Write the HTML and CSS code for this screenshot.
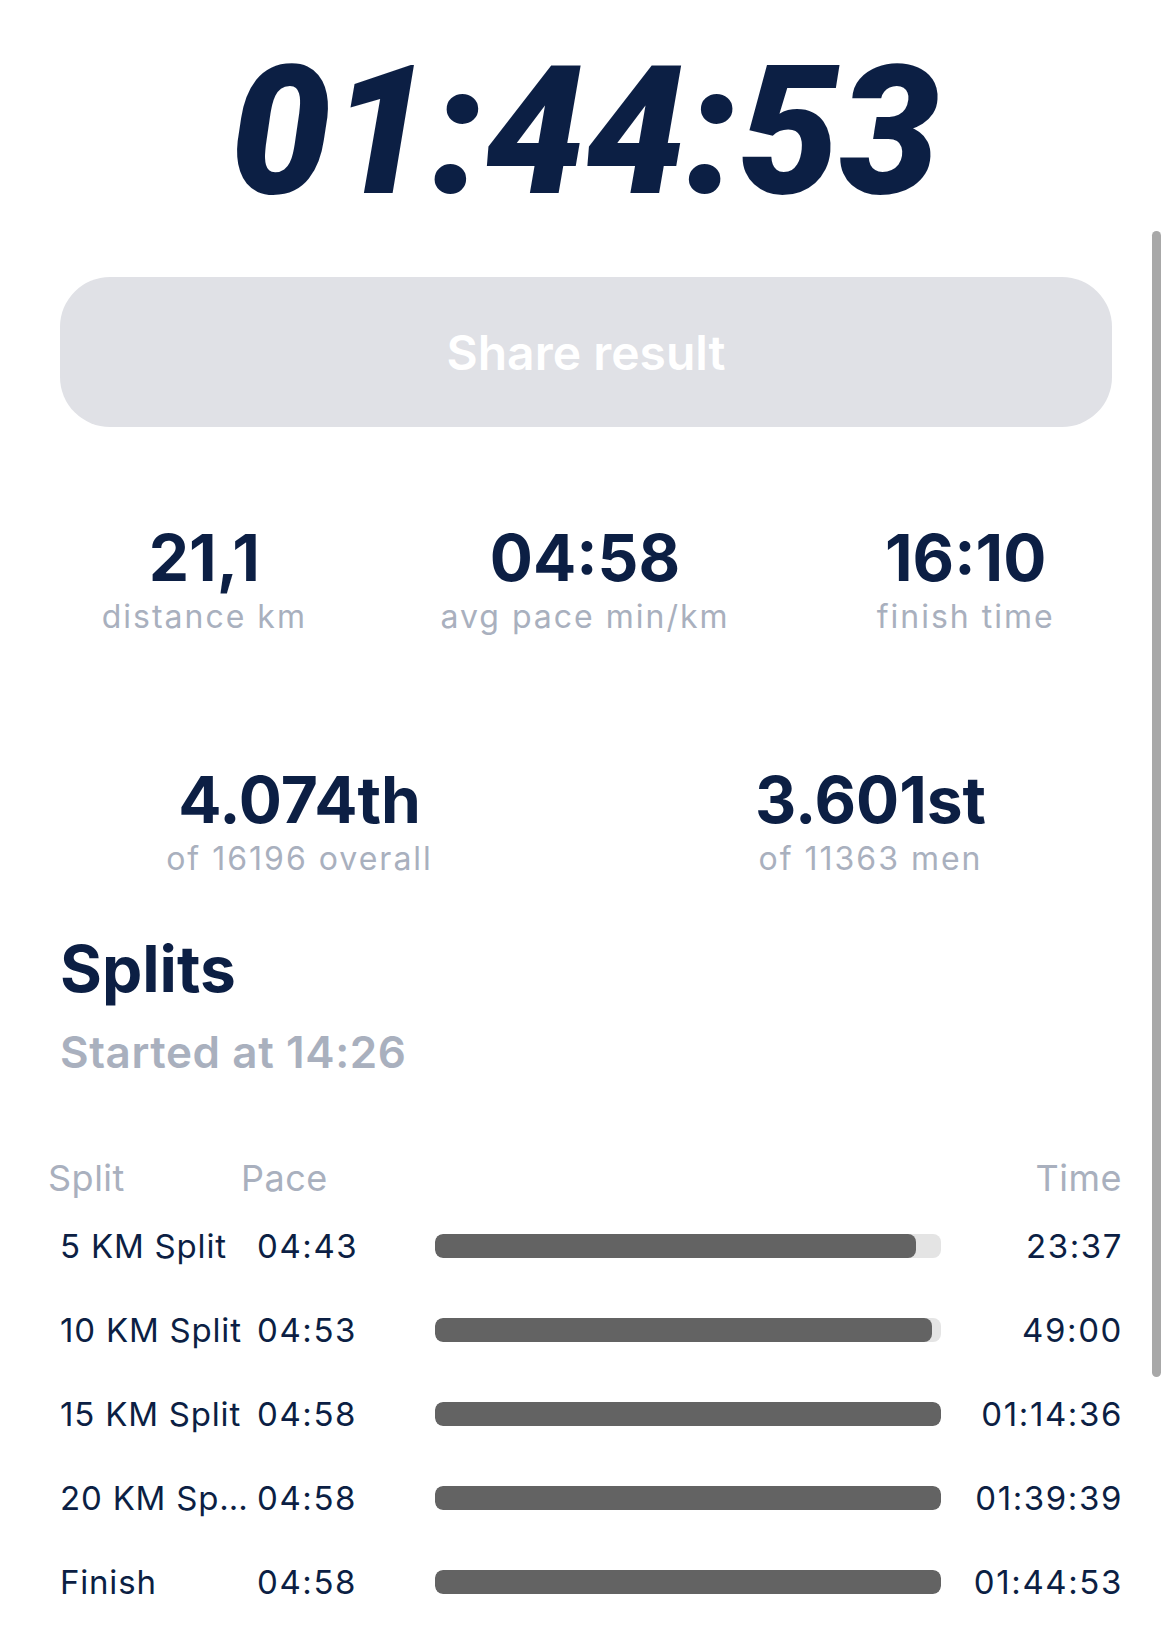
FILE: index.html
```html
<!DOCTYPE html>
<html lang="en">
<head>
  <meta charset="UTF-8" />
  <meta name="viewport" content="width=device-width, initial-scale=1.0"/>
  <title>Race result</title>
  <link rel="stylesheet" href="styles.css">
</head>
<body>
  <div class="scroll-indicator"></div>

  <h1 class="clock">01:44:53</h1>

  <button class="share-btn">Share result</button>

  <div class="stats stats-3">
    <div class="stat">
      <div class="stat-value">21,1</div>
      <div class="stat-label">distance km</div>
    </div>
    <div class="stat">
      <div class="stat-value">04:58</div>
      <div class="stat-label">avg pace min/km</div>
    </div>
    <div class="stat">
      <div class="stat-value">16:10</div>
      <div class="stat-label">finish time</div>
    </div>
  </div>

  <div class="stats stats-2">
    <div class="stat">
      <div class="stat-value">4.074th</div>
      <div class="stat-label">of 16196 overall</div>
    </div>
    <div class="stat">
      <div class="stat-value">3.601st</div>
      <div class="stat-label">of 11363 men</div>
    </div>
  </div>

  <h2 class="splits-title">Splits</h2>
  <div class="splits-start">Started at 14:26</div>

  <div class="splits-head">
    <span class="head-split">Split</span>
    <span class="head-pace">Pace</span>
    <span class="head-time">Time</span>
  </div>

  <div class="splits">
    <div class="split-row">
      <span class="split-name">5 KM Split</span>
      <span class="split-pace">04:43</span>
      <div class="bar"><div class="bar-fill" style="width: 94.97%"></div></div>
      <span class="split-time">23:37</span>
    </div>
    <div class="split-row">
      <span class="split-name">10 KM Split</span>
      <span class="split-pace">04:53</span>
      <div class="bar"><div class="bar-fill" style="width: 98.32%"></div></div>
      <span class="split-time">49:00</span>
    </div>
    <div class="split-row">
      <span class="split-name">15 KM Split</span>
      <span class="split-pace">04:58</span>
      <div class="bar"><div class="bar-fill" style="width: 100%"></div></div>
      <span class="split-time">01:14:36</span>
    </div>
    <div class="split-row">
      <span class="split-name">20 KM Sp…</span>
      <span class="split-pace">04:58</span>
      <div class="bar"><div class="bar-fill" style="width: 100%"></div></div>
      <span class="split-time">01:39:39</span>
    </div>
    <div class="split-row">
      <span class="split-name">Finish</span>
      <span class="split-pace">04:58</span>
      <div class="bar"><div class="bar-fill" style="width: 100%"></div></div>
      <span class="split-time">01:44:53</span>
    </div>
  </div>
</body>
</html>
```

FILE: styles.css
```css
body {
  background-color: #fff;
  color: #0c1f44;
  font-family: Inter, "Noto Sans", sans-serif;
  margin: 0;
  padding: 0;
  position: relative;
  overflow: hidden;
}
.scroll-indicator {
  position: absolute;
  top: 231px;
  right: 9px;
  width: 9px;
  height: 1146px;
  border-radius: 5px;
  background-color: #a8a8a8;
}
.clock {
  margin: 32px 0 0;
  font-family: Roboto, sans-serif;
  font-size: 179px;
  font-weight: 900;
  font-style: italic;
  line-height: 200px;
  text-align: center;
}
.share-btn {
  display: block;
  box-sizing: border-box;
  width: 1052px;
  height: 150px;
  margin: 45px 0 0 60px;
  border: none;
  border-radius: 50px;
  background-color: #e0e1e6;
  color: #fff;
  font-family: Inter, sans-serif;
  font-size: 48px;
  font-weight: 600;
}
.stats {
  display: grid;
  padding: 0 14px;
  text-align: center;
}
.stats-3 {
  grid-template-columns: repeat(3, 1fr);
  margin-top: 95px;
}
.stats-2 {
  grid-template-columns: repeat(2, 1fr);
  margin-top: 124px;
}
.stat-value {
  font-size: 64px;
  font-weight: 700;
  line-height: 72px;
}
.stat-label {
  font-size: 32px;
  line-height: 46px;
  color: #a9b0be;
  letter-spacing: 2px;
}
.splits-title {
  margin: 47px 0 0 60px;
  font-size: 64px;
  font-weight: 700;
  line-height: 80px;
}
.splits-start {
  margin: 15px 0 0 60px;
  font-size: 44px;
  font-weight: 600;
  line-height: 56px;
  color: #a9b0be;
  letter-spacing: 0.6px;
}
.splits-head {
  display: flex;
  margin-top: 74px;
  padding: 0 48px;
  font-size: 36px;
  line-height: 48px;
  color: #a9b0be;
  letter-spacing: 0.5px;
}
.head-split {
  width: 193px;
}
.head-pace {
  flex: 1;
}
.splits {
  margin-top: 2px;
  padding: 0 47px 0 60px;
}
.split-row {
  display: grid;
  grid-template-columns: 185px 190px 506px 1fr;
  align-items: center;
  height: 84px;
  font-size: 33px;
  letter-spacing: 0.8px;
}
.split-name {
  white-space: nowrap;
}
.split-pace {
  padding-left: 12px;
  letter-spacing: 1.6px;
}
.split-time {
  text-align: right;
  letter-spacing: 1.6px;
}
.bar {
  height: 24px;
  border-radius: 8px;
  background-color: #e4e4e4;
  overflow: hidden;
}
.bar-fill {
  height: 100%;
  border-radius: 8px;
  background-color: #636363;
}
```
